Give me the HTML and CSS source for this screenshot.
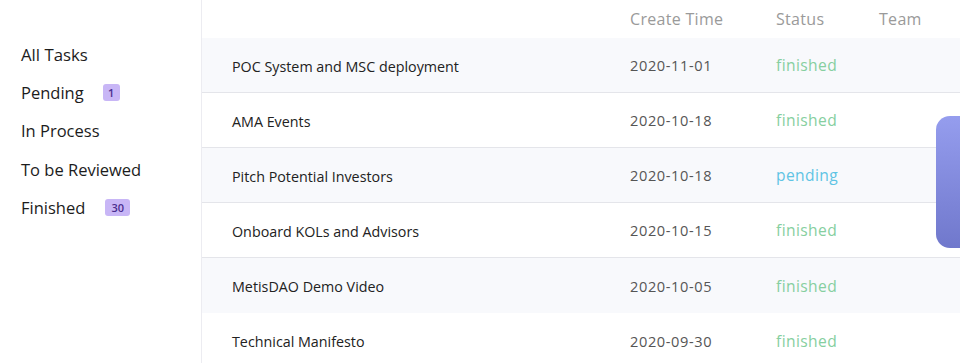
FILE: index.html
```html
<!DOCTYPE html>
<html lang="en">
<head>
  <meta charset="UTF-8" />
  <meta name="viewport" content="width=device-width, initial-scale=1.0"/>
  <title>Tasks</title>
  <link rel="stylesheet" href="styles.css">
</head>
<body>
  <div class="page">
    <aside class="sidebar">
      <div class="nav-item active">All Tasks</div>
      <div class="nav-item">Pending <span class="badge">1</span></div>
      <div class="nav-item">In Process</div>
      <div class="nav-item">To be Reviewed</div>
      <div class="nav-item">Finished <span class="badge badge-wide">30</span></div>
    </aside>

    <main class="tasks">
      <div class="row head">
        <div></div>
        <div>Create Time</div>
        <div>Status</div>
        <div>Team</div>
      </div>
      <div class="row shade line">
        <div class="title">POC System and MSC deployment</div>
        <div class="date">2020-11-01</div>
        <div class="status done">finished</div>
        <div></div>
      </div>
      <div class="row line">
        <div class="title">AMA Events</div>
        <div class="date">2020-10-18</div>
        <div class="status done">finished</div>
        <div></div>
      </div>
      <div class="row shade line">
        <div class="title">Pitch Potential Investors</div>
        <div class="date">2020-10-18</div>
        <div class="status wait">pending</div>
        <div></div>
      </div>
      <div class="row line">
        <div class="title">Onboard KOLs and Advisors</div>
        <div class="date">2020-10-15</div>
        <div class="status done">finished</div>
        <div></div>
      </div>
      <div class="row shade">
        <div class="title">MetisDAO Demo Video</div>
        <div class="date">2020-10-05</div>
        <div class="status done">finished</div>
        <div></div>
      </div>
      <div class="row">
        <div class="title">Technical Manifesto</div>
        <div class="date">2020-09-30</div>
        <div class="status done">finished</div>
        <div></div>
      </div>
    </main>

    <div class="side-tab"></div>
  </div>
</body>
</html>
```

FILE: styles.css
```css
body { margin: 0; font-family: "Open Sans", "Noto Sans", sans-serif; background: #fff; overflow: hidden; }
.page { display: flex; height: 363px; position: relative; }

.sidebar { width: 202px; border-right: 1px solid #ececf1; padding-top: 35px; box-sizing: border-box; flex-shrink: 0; }
.nav-item { display: flex; align-items: center; height: 38.4px; padding-left: 21px; font-size: 16.5px; color: #1c1c1c; }
.active { font-size: 16.8px; }
.badge { display: inline-flex; align-items: center; justify-content: center; width: 17px; height: 17px; margin-left: 19px; border-radius: 3px; background: #c8b6f6; color: #4b2d8f; font-size: 11px; font-weight: 600; }
.badge-wide { width: 25px; margin-left: 20px; }

.tasks { flex: 1; }
.row { display: grid; grid-template-columns: 398px 146px 103px 1fr; align-items: center; padding-left: 30px; height: 55px; box-sizing: border-box; }
.row.head { height: 38px; color: #9a9a9a; font-size: 16px; letter-spacing: 0.3px; }
.row.shade { background: #f8f9fc; }
.row.line { border-bottom: 1px solid #e4e5ea; }
.title { font-size: 14.3px; color: #222; padding-top: 2px; }
.date { font-size: 14.6px; letter-spacing: 0.6px; color: #555; }
.status { font-size: 15.6px; letter-spacing: 0.4px; }
.done { color: #86cfa0; }
.wait { color: #5fc4e4; }

.side-tab { position: absolute; left: 936px; top: 116px; width: 40px; height: 132px; border-radius: 14px; background: linear-gradient(180deg, #959dee 0%, #7078cc 100%); }
```
